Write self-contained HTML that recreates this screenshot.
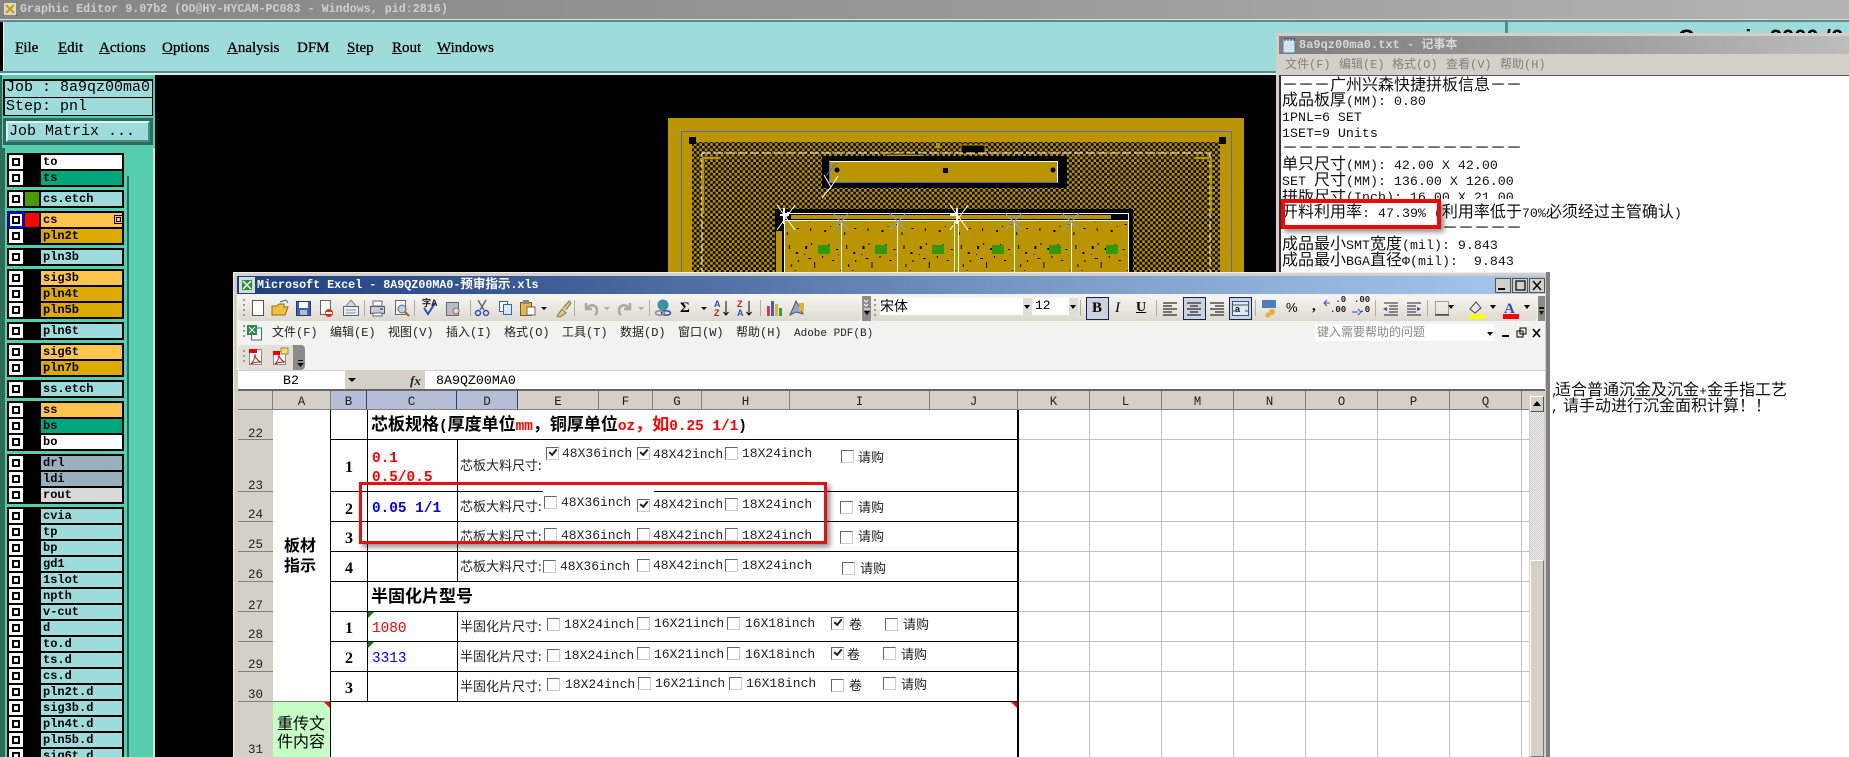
<!DOCTYPE html>
<html><head><meta charset="utf-8"><title>Graphic Editor</title>
<style>
html,body{margin:0;padding:0;width:1849px;height:757px;overflow:hidden;background:#000}
body{position:relative;font-family:"Liberation Mono","WenQuanYi Zen Hei","Noto Sans CJK SC",monospace;color:#000}
div,svg,i,b.r{position:absolute;display:block}
.t{position:absolute;white-space:pre;line-height:16px}
tt{font-family:"Liberation Mono",monospace;font-size:.833em}
.menu{font:15px "Liberation Serif",serif;-webkit-text-stroke:.3px #000;top:40px}
.grp{left:7px;width:117px;background:#000}
.c{left:9px;width:14px;height:14px;background:#fff;box-sizing:border-box}
.c:after{content:"";position:absolute;left:3px;top:3px;width:4px;height:4px;border:2px solid #000;background:#fff}
.c.act{outline:2px solid #00f;outline-offset:-1px}
b.r{left:41px;width:81px;height:14px;line-height:15px;font-size:12px;font-weight:bold;background:#9edcdc;padding-left:2px;box-sizing:border-box;white-space:pre;overflow:hidden}
.g{background:#ffc64d!important}.d{background:#dcaa00!important}.k{background:#00a67c!important}.w{background:#fff!important}.s{background:#9ab0bc!important}.l{background:#d9d9d9!important}
.n{font-size:16px;left:1282px;color:#111}
.ch{top:391px;height:18px;background:#d4d0c8;border-right:1px solid #808080;box-sizing:border-box;text-align:center;font-size:12.5px;line-height:22px;color:#222;overflow:hidden}
.chs{background:#b6bdd6;border-right-color:#2a3f7a}
.rh{left:238px;width:35px;background:#d4d0c8;border-bottom:1px solid #808080;box-sizing:border-box;text-align:center;font-size:12.5px;color:#222;overflow:hidden}
.h{left:331px;width:687px;height:1px;background:#000}
.v{width:1px;background:#000}
.gh{left:1018px;width:511px;height:1px;background:#c0c0c0}
.gv{top:410px;height:347px;width:1px;background:#c0c0c0}
.f{font-size:13px;color:#222}
.f13{font-size:13px;color:#222;font-family:"WenQuanYi Zen Hei","Noto Sans CJK SC",sans-serif}
.cb{width:11px;height:11px;background:#fff;border:1px solid #666;border-right-color:#ccc;border-bottom-color:#ccc;box-sizing:content-box}
.on:after{content:"";position:absolute;left:2px;top:1px;width:6px;height:3px;border-left:2px solid #222;border-bottom:2px solid #222;transform:rotate(-50deg)}
.bb{font-size:16px;font-weight:bold;font-family:"Liberation Serif",serif}
.em{font-size:14.4px}
.mt{font-size:12px;color:#222;top:324px;font-family:"WenQuanYi Zen Hei","Noto Sans CJK SC",sans-serif}
.mt tt{font-size:1em}
.red{border:4px solid #ee0808;box-sizing:border-box;box-shadow:3px 3px 5px rgba(0,0,0,.45)}
</style></head><body>

<!-- top title -->
<div style="left:0;top:0;width:1849px;height:19px;background:linear-gradient(90deg,#858585,#9a9a9a 55%,#b4b4b4)"></div>
<div style="left:0;top:19px;width:1849px;height:1px;background:#ddd"></div>
<div style="left:0;top:20px;width:1849px;height:2px;background:#5b8a8a"></div>
<svg style="left:3px;top:2px" width="14" height="14"><rect width="14" height="14" fill="#d8d8d0" stroke="#333"/><path d="M3 3l8 8M11 3l-8 8" stroke="#c8a000" stroke-width="2"/></svg>
<div class="t" style="left:20px;top:1px;color:#cfcfcf;font-size:11.7px;font-weight:bold">Graphic Editor 9.07b2 (OO@HY-HYCAM-PC083 - Windows, pid:2816)</div>

<!-- menu -->
<div style="left:3px;top:22px;width:1846px;height:51px;background:#9edcdc;border-left:1px solid #eee;box-sizing:border-box"></div>
<div style="left:0;top:71px;width:1849px;height:2px;background:#5b8a8a"></div>
<div style="left:0;top:73px;width:1849px;height:2px;background:#d8f2f2"></div>
<div style="left:1505px;top:20px;width:3px;height:55px;background:#5b8a8a"></div>
<div class="t menu" style="left:15px"><u>F</u>ile</div>
<div class="t menu" style="left:58px"><u>E</u>dit</div>
<div class="t menu" style="left:99px"><u>A</u>ctions</div>
<div class="t menu" style="left:162px"><u>O</u>ptions</div>
<div class="t menu" style="left:227px"><u>A</u>nalysis</div>
<div class="t menu" style="left:297px">DFM</div>
<div class="t menu" style="left:347px"><u>S</u>tep</div>
<div class="t menu" style="left:392px"><u>R</u>out</div>
<div class="t menu" style="left:437px"><u>W</u>indows</div>
<div style="left:1678px;top:22px;width:171px;height:11px;overflow:hidden"><div class="t" style="left:0;top:5px;font:bold 22px/22px 'Liberation Sans',sans-serif;white-space:pre">Genesis 2000 /6</div></div>

<!-- left panel -->
<div style="left:0;top:75px;width:155px;height:682px;background:#55ceb0"></div>
<div style="left:0;top:75px;width:2px;height:682px;background:#2e6b5a"></div>
<div style="left:153px;top:148px;width:2px;height:609px;background:#b9eedd"></div>
<div style="left:2px;top:148px;width:3px;height:609px;background:#2e6b5a"></div>
<div style="left:5px;top:148px;width:122px;height:609px;background:#55ceb0"></div>
<div style="left:127px;top:176px;width:2px;height:581px;background:#2e6b5a"></div>
<div style="left:3px;top:79px;width:150px;height:37px;background:#000"></div>
<div style="left:5px;top:81px;width:147px;height:16px;background:#9edcdc"></div>
<div style="left:5px;top:98px;width:147px;height:17px;background:#9edcdc"></div>
<div class="t" style="left:6px;top:80px;font-size:15px">Job : 8a9qz00ma0</div>
<div class="t" style="left:6px;top:99px;font-size:15px">Step: pnl</div>
<div style="left:3px;top:118px;width:150px;height:27px;background:#2e6b5a"></div>
<div style="left:6px;top:121px;width:144px;height:21px;background:#9edcdc;border:2px solid;border-color:#d8f4f4 #4c8a8a #4c8a8a #d8f4f4;box-sizing:border-box"></div>
<div class="t" style="left:9px;top:124px;font-size:15px">Job Matrix ...</div>

<!-- layer groups -->
<div class="grp" style="top:153px;height:34px"></div>
<div class="grp" style="top:190px;height:18px"></div>
<div class="grp" style="top:211px;height:34px"></div>
<div class="grp" style="top:248px;height:18px"></div>
<div class="grp" style="top:269px;height:50px"></div>
<div class="grp" style="top:322px;height:18px"></div>
<div class="grp" style="top:343px;height:34px"></div>
<div class="grp" style="top:380px;height:18px"></div>
<div class="grp" style="top:401px;height:50px"></div>
<div class="grp" style="top:454px;height:50px"></div>
<div class="grp" style="top:507px;height:250px"></div>

<i class="c" style="top:155px"></i><b class="r w" style="top:155px">to</b>
<i class="c" style="top:171px"></i><b class="r k" style="top:171px">ts</b>
<i class="c" style="top:192px"></i><b class="r" style="top:192px">cs.etch</b>
<div style="left:25px;top:192px;width:14px;height:14px;background:#4a9a00"></div>
<i class="c act" style="top:213px"></i><b class="r g" style="top:213px">cs</b>
<div style="left:25px;top:213px;width:14px;height:14px;background:#f00"></div>
<div style="left:116px;top:217px;width:3px;height:3px;border:1px solid #000;outline:1px solid #000;outline-offset:1px"></div>
<i class="c" style="top:229px"></i><b class="r d" style="top:229px">pln2t</b>
<i class="c" style="top:250px"></i><b class="r" style="top:250px">pln3b</b>
<i class="c" style="top:271px"></i><b class="r g" style="top:271px">sig3b</b>
<i class="c" style="top:287px"></i><b class="r d" style="top:287px">pln4t</b>
<i class="c" style="top:303px"></i><b class="r d" style="top:303px">pln5b</b>
<i class="c" style="top:324px"></i><b class="r" style="top:324px">pln6t</b>
<i class="c" style="top:345px"></i><b class="r g" style="top:345px">sig6t</b>
<i class="c" style="top:361px"></i><b class="r d" style="top:361px">pln7b</b>
<i class="c" style="top:382px"></i><b class="r" style="top:382px">ss.etch</b>
<i class="c" style="top:403px"></i><b class="r g" style="top:403px">ss</b>
<i class="c" style="top:419px"></i><b class="r k" style="top:419px">bs</b>
<i class="c" style="top:435px"></i><b class="r w" style="top:435px">bo</b>
<i class="c" style="top:456px"></i><b class="r s" style="top:456px">drl</b>
<i class="c" style="top:472px"></i><b class="r s" style="top:472px">ldi</b>
<i class="c" style="top:488px"></i><b class="r l" style="top:488px">rout</b>
<i class="c" style="top:509px"></i><b class="r" style="top:509px">cvia</b>
<i class="c" style="top:525px"></i><b class="r" style="top:525px">tp</b>
<i class="c" style="top:541px"></i><b class="r" style="top:541px">bp</b>
<i class="c" style="top:557px"></i><b class="r" style="top:557px">gd1</b>
<i class="c" style="top:573px"></i><b class="r" style="top:573px">1slot</b>
<i class="c" style="top:589px"></i><b class="r" style="top:589px">npth</b>
<i class="c" style="top:605px"></i><b class="r" style="top:605px">v-cut</b>
<i class="c" style="top:621px"></i><b class="r" style="top:621px">d</b>
<i class="c" style="top:637px"></i><b class="r" style="top:637px">to.d</b>
<i class="c" style="top:653px"></i><b class="r" style="top:653px">ts.d</b>
<i class="c" style="top:669px"></i><b class="r" style="top:669px">cs.d</b>
<i class="c" style="top:685px"></i><b class="r" style="top:685px">pln2t.d</b>
<i class="c" style="top:701px"></i><b class="r" style="top:701px">sig3b.d</b>
<i class="c" style="top:717px"></i><b class="r" style="top:717px">pln4t.d</b>
<i class="c" style="top:733px"></i><b class="r" style="top:733px">pln5b.d</b>
<i class="c" style="top:749px"></i><b class="r" style="top:749px">sig6t.d</b>

<!-- PCB -->
<svg style="left:0;top:0" width="1849" height="757">
<defs>
<pattern id="chk" width="5.4" height="5.4" patternUnits="userSpaceOnUse"><rect width="5.4" height="5.4" fill="#000"/><rect width="2.7" height="2.7" fill="#bb9500"/><rect x="2.7" y="2.7" width="2.7" height="2.7" fill="#bb9500"/></pattern>
<pattern id="spk" width="57.3" height="60" patternUnits="userSpaceOnUse"><rect width="57.3" height="60" fill="#bb9500"/>
<g fill="#000"><rect x="3" y="6" width="2" height="3"/><rect x="9" y="3" width="1" height="2"/><rect x="16" y="8" width="2" height="2"/><rect x="26" y="4" width="1" height="2"/><rect x="34" y="9" width="2" height="1"/><rect x="44" y="5" width="1" height="4"/><rect x="51" y="12" width="2" height="2"/><rect x="6" y="18" width="3" height="1"/><rect x="12" y="22" width="1" height="6"/><rect x="20" y="16" width="1" height="2"/><rect x="30" y="20" width="2" height="1"/><rect x="46" y="24" width="1" height="3"/><rect x="53" y="20" width="1" height="2"/><rect x="4" y="34" width="2" height="1"/><rect x="14" y="40" width="12" height="1"/><rect x="30" y="38" width="1" height="2"/><rect x="36" y="44" width="2" height="1"/><rect x="48" y="36" width="3" height="2"/><rect x="8" y="48" width="1" height="3"/><rect x="22" y="50" width="2" height="2"/><rect x="42" y="52" width="1" height="3"/><rect x="52" y="48" width="2" height="1"/><rect x="2" y="14" width="1" height="1"/><rect x="24" y="12" width="1" height="1"/><rect x="38" y="30" width="1" height="1"/><rect x="18" y="32" width="1" height="2"/><rect x="50" y="30" width="1" height="1"/><rect x="28" y="46" width="1" height="1"/></g>
<g fill="#3d9a10"><rect x="6" y="38" width="1" height="5"/><rect x="10" y="30" width="1" height="1"/><rect x="36" y="14" width="1" height="2"/></g></pattern>
</defs>
<rect x="668" y="118" width="576" height="160" fill="#bb9500"/>
<rect x="681.5" y="131.5" width="550" height="150" fill="none" stroke="#4a6cd0"/>
<rect x="692" y="142" width="528" height="140" fill="url(#chk)"/>
<rect x="689" y="137" width="7" height="7" fill="#000"/><rect x="1219" y="137" width="7" height="7" fill="#000"/>
<rect x="936" y="143" width="4" height="5" fill="#bb9500"/>
<rect x="961" y="145" width="24" height="9" fill="#000" stroke="#bb9500"/>
<rect x="886" y="154" width="38" height="5" fill="#bb9500" stroke="#000"/>
<rect x="702" y="153" width="508" height="130" fill="none" stroke="#fff" stroke-dasharray="9 3"/>
<rect x="822" y="156" width="245" height="32" fill="#000"/>
<rect x="829.5" y="161.5" width="228" height="21" fill="#bb9500" stroke="#4a6cd0"/>
<path d="M829.5 161.5h228v21" fill="none" stroke="#fff"/>
<circle cx="837" cy="170" r="2.5" fill="#000"/><rect x="943" y="168" width="5" height="5" fill="#000"/><circle cx="1053" cy="170" r="2.5" fill="#000"/>
<path d="M700 159h3v55M703 158h16M1209 158h-15M1211 159v55" stroke="#bb9500" stroke-width="2" fill="none"/>
<rect x="775" y="209" width="358" height="77" fill="#000"/>
<rect x="776" y="231" width="6" height="50" fill="#bb9500"/>
<rect x="791" y="215" width="320" height="4" fill="#bb9500"/>
<rect x="784" y="221" width="345" height="60" fill="url(#spk)"/>
<path d="M784.5 213.5H1128.5V280M784.5 220.5H1128.5M784.5 214V280M841.5 220V280M897.5 220V280M954.5 220V280M958.5 220V280M1014.5 220V280M1071.5 220V280" stroke="#fff" fill="none"/>
<g fill="#2f9a10"><rect x="818" y="245" width="12" height="9"/><rect x="875" y="245" width="12" height="9"/><rect x="932" y="245" width="12" height="9"/><rect x="992" y="245" width="12" height="9"/><rect x="1049" y="245" width="12" height="9"/><rect x="1106" y="245" width="12" height="9"/></g>
<path d="M777 205l18 25M795 205l-18 25M950 205l18 25M968 205l-18 25" stroke="#fff" fill="none"/>
<path d="M824 175l7 12 -9 11M831 187l7 -11" stroke="#fff" fill="none"/>
<path d="M833 213l8 9 8-9M833 230l8-8 8 8M890 213l8 9 8-9M890 230l8-8 8 8M1005 213l9 9 8-9M1005 230l9-8 8 8M1062 213l9 9 8-9M1062 230l9-8 8 8" stroke="#7fa0f0" fill="none"/>
<path d="M780 215h8v-3M784 208v16M958 215h-8M957 208v16" stroke="#fff" stroke-width="2" fill="none"/>
<path d="M826 176l10-13" stroke="#4a6cd0"/>
</svg>

<!-- notepad -->
<div style="left:1276px;top:33px;width:573px;height:724px;background:#fff"></div>
<div style="left:1276px;top:33px;width:573px;height:3px;background:#d4d0c8"></div>
<div style="left:1276px;top:33px;width:3px;height:250px;background:#d4d0c8"></div>
<div style="left:1279px;top:36px;width:570px;height:18px;background:linear-gradient(90deg,#7e7e7e,#a0a0a0 60%,#bdbdbd)"></div>
<div style="left:1279px;top:54px;width:570px;height:21px;background:#d4d0c8"></div>
<div style="left:1279px;top:75px;width:570px;height:1px;background:#555"></div>
<div style="left:1279px;top:75px;width:2px;height:210px;background:#333"></div>
<svg style="left:1282px;top:37px" width="14" height="17"><rect x="1" y="2" width="12" height="14" fill="#cfe4f5" stroke="#5a7aa0"/><path d="M3 1v3M6 1v3M9 1v3M12 1v3" stroke="#345"/></svg>
<div class="t" style="left:1299px;top:37px;color:#d8d8d8;font-size:12px;font-weight:bold">8a9qz00ma0.txt - 记事本</div>
<div class="t mt" style="left:1285px;top:56px;color:#808080">文件<tt>(F)</tt></div>
<div class="t mt" style="left:1339px;top:56px;color:#808080">编辑<tt>(E)</tt></div>
<div class="t mt" style="left:1392px;top:56px;color:#808080">格式<tt>(O)</tt></div>
<div class="t mt" style="left:1446px;top:56px;color:#808080">查看<tt>(V)</tt></div>
<div class="t mt" style="left:1500px;top:56px;color:#808080">帮助<tt>(H)</tt></div>

<div class="t n" style="top:78px">－－－广州兴森快捷拼板信息－－</div>
<div class="t n" style="top:93px">成品板厚<tt>(MM): 0.80</tt></div>
<div class="t n" style="top:109px"><tt>1PNL=6 SET</tt></div>
<div class="t n" style="top:125px"><tt>1SET=9 Units</tt></div>
<div class="t n" style="top:141px">－－－－－－－－－－－－－－－</div>
<div class="t n" style="top:157px">单只尺寸<tt>(MM): 42.00 X 42.00</tt></div>
<div class="t n" style="top:173px"><tt>SET </tt>尺寸<tt>(MM): 136.00 X 126.00</tt></div>
<div class="t n" style="top:189px;height:10px;overflow:hidden">拼版尺寸<tt>(Inch): 16.00 X 21.00</tt></div>
<div class="t n" style="top:205px">开料利用率<tt>: 47.39% (</tt>利用率低于<tt>70%</tt>必须经过主管确认<tt>)</tt></div>
<div class="t n" style="top:221px;left:1442px">－－－－－</div>
<div class="t n" style="top:237px">成品最小<tt>SMT</tt>宽度<tt>(mil): 9.843</tt></div>
<div class="t n" style="top:253px">成品最小<tt>BGA</tt>直径<tt>&#934;(mil):  9.843</tt></div>
<div class="t n" style="top:383px;left:1551px"><tt>,</tt></div>
<div class="t n" style="top:383px;left:1555px">适合普通沉金及沉金<tt>+</tt>金手指工艺</div>
<div class="t n" style="top:399px;left:1551px"><tt>,</tt></div>
<div class="t n" style="top:399px;left:1563px">请手动进行沉金面积计算！！</div>
<div class="red" style="left:1281px;top:199px;width:160px;height:30px"></div>

<!-- Excel window -->
<div style="left:233px;top:272px;width:1317px;height:485px;background:#d4d0c8;border-top:1px solid #eee;border-left:1px solid #eee;box-sizing:border-box"></div>
<div style="left:1546px;top:272px;width:4px;height:485px;background:#808080"></div>
<div style="left:237px;top:276px;width:1308px;height:18px;background:linear-gradient(90deg,#1f3f80,#3f5f98 25%,#7f9fca 65%,#a6c8ee)"></div>
<svg style="left:239px;top:277px" width="16" height="16"><rect x=".5" y=".5" width="15" height="15" fill="#cfe0c8" stroke="#ddd"/><rect x="3" y="3" width="10" height="10" fill="#2d8a3a"/><path d="M4 4l8 8M12 4l-8 8" stroke="#fff" stroke-width="1.5"/></svg>
<div class="t" style="left:257px;top:277px;color:#fff;font-size:11.7px;font-weight:bold">Microsoft Excel - 8A9QZ00MA0-<span style="font-size:12.5px">预审指示</span>.xls</div>
<svg style="left:1495px;top:278px" width="51" height="15">
<g fill="#d4d0c8" stroke="#555"><rect x=".5" y=".5" width="15" height="14"/><rect x="17.5" y=".5" width="15" height="14"/><rect x="34.5" y=".5" width="15" height="14"/></g>
<rect x="3" y="10" width="7" height="2" fill="#000"/><rect x="21" y="3" width="9" height="9" fill="none" stroke="#000" stroke-width="1.2"/><path d="M38 3l8 9M46 3l-8 9" stroke="#000" stroke-width="1.4"/></svg>

<!-- toolbars -->
<div style="left:237px;top:294px;width:1308px;height:76px;background:#f2f2ef"></div>
<div style="left:238px;top:296px;width:623px;height:25px;background:linear-gradient(#f6f5f0,#dcd9cf);border-radius:4px"></div>
<div style="left:862px;top:296px;width:9px;height:25px;background:#8b8b8b"></div>
<div style="left:871px;top:296px;width:666px;height:25px;background:linear-gradient(#f6f5f0,#dcd9cf);border-radius:4px"></div>
<div style="left:1538px;top:296px;width:7px;height:25px;background:#8b8b8b"></div>
<div style="left:238px;top:345px;width:56px;height:25px;background:#e2dfd6;border-radius:4px 0 0 4px"></div>
<div style="left:293px;top:345px;width:12px;height:25px;background:#8b8b8b;border-radius:0 4px 4px 0"></div>
<div style="left:880px;top:298px;width:152px;height:17px;background:#fff"></div>
<div style="left:1023px;top:298px;width:9px;height:17px;background:#e0ddd4"></div>
<div class="t" style="left:880px;top:298px;font-size:14px;font-family:'WenQuanYi Zen Hei','Noto Sans CJK SC',sans-serif">宋体</div>
<div style="left:1032px;top:298px;width:46px;height:17px;background:#fff"></div>
<div style="left:1069px;top:298px;width:9px;height:17px;background:#e0ddd4"></div>
<div class="t" style="left:1035px;top:298px;font-size:13px">12</div>
<div style="left:1086px;top:297px;width:23px;height:23px;background:#cdd2dc;border:1px solid #0a2468;box-sizing:border-box"></div>
<div style="left:1183px;top:297px;width:23px;height:23px;background:#cdd2dc;border:1px solid #0a2468;box-sizing:border-box"></div>
<div style="left:1229px;top:297px;width:23px;height:23px;background:#cdd2dc;border:1px solid #0a2468;box-sizing:border-box"></div>
<div class="t" style="left:1092px;top:300px;font:bold 15px/16px 'Liberation Serif',serif">B</div>
<div class="t" style="left:1115px;top:300px;font:italic 15px/16px 'Liberation Serif',serif">I</div>
<div class="t" style="left:1136px;top:300px;font:bold 14px/16px 'Liberation Serif',serif"><u>U</u></div>
<div class="t" style="left:1286px;top:300px;font:13px/16px 'Liberation Sans',sans-serif">%</div>
<div class="t" style="left:1312px;top:298px;font:bold 15px/16px 'Liberation Serif',serif">,</div>
<div class="t" style="left:680px;top:300px;font:bold 15px/16px 'Liberation Serif',serif">Σ</div>
<div class="t" style="left:1330px;top:295px;font-size:9px;font-weight:bold;line-height:10px;white-space:pre;color:#222"> .0
.00</div>
<div class="t" style="left:1354px;top:295px;font-size:9px;font-weight:bold;line-height:10px;white-space:pre;color:#222">.00
 .0</div>

<svg style="left:0;top:0" width="1849" height="757">
<g fill="#999"><rect x="243" y="299" width="2" height="2"/><rect x="243" y="304" width="2" height="2"/><rect x="243" y="309" width="2" height="2"/><rect x="243" y="314" width="2" height="2"/><rect x="874" y="299" width="2" height="2"/><rect x="874" y="304" width="2" height="2"/><rect x="874" y="309" width="2" height="2"/><rect x="874" y="314" width="2" height="2"/><rect x="243" y="325" width="2" height="2"/><rect x="243" y="330" width="2" height="2"/><rect x="243" y="335" width="2" height="2"/><rect x="243" y="350" width="2" height="2"/><rect x="243" y="355" width="2" height="2"/><rect x="243" y="360" width="2" height="2"/></g>
<rect x="252.5" y="300.5" width="11" height="15" fill="#fff" stroke="#555"/>
<path d="M272 315v-9h5l2-2h5v3h4l-3 8z" fill="#f0c040" stroke="#8a6a10"/><path d="M280 302l6-2 2 3" stroke="#3c6cc0" fill="none"/>
<rect x="296.5" y="301.5" width="14" height="14" fill="#3a62b0" stroke="#223c7a"/><rect x="299" y="302" width="9" height="6" fill="#fff"/><rect x="300" y="310" width="7" height="5" fill="#bbb"/>
<rect x="320.5" y="300.5" width="10" height="14" fill="#fff" stroke="#666"/><circle cx="329" cy="313" r="4" fill="#d83020"/><rect x="326" y="312" width="6" height="2" fill="#fff"/>
<rect x="343.5" y="306.5" width="15" height="9" fill="#e8eef8" stroke="#567"/><path d="M346 306l5-6 5 6" fill="#d8d8d8" stroke="#789"/><path d="M346 310h10M346 313h10" stroke="#88a"/>
<path d="M370.5 306.5h14v7h-14z" fill="#c8ccd8" stroke="#556"/><rect x="373" y="301" width="9" height="5" fill="#fff" stroke="#667"/><rect x="373" y="313" width="9" height="3" fill="#fff" stroke="#667"/><rect x="380" y="308" width="3" height="2" fill="#3ca040"/>
<rect x="395.5" y="300.5" width="10" height="14" fill="#fff" stroke="#667"/><circle cx="402" cy="309" r="4" fill="#bcd4ee" stroke="#567"/><path d="M405 312l4 4" stroke="#996020" stroke-width="2"/>
<path d="M424 308l4 6 7-11" fill="none" stroke="#2a50c0" stroke-width="2"/><text x="422" y="306" font-size="9" font-weight="bold" fill="#222" font-family="Liberation Sans">字A</text>
<rect x="446.5" y="302.5" width="12" height="13" fill="#b8bcc8" stroke="#667"/><circle cx="456" cy="311" r="3" fill="#cfe0f0" stroke="#a07020"/>
<path d="M478 300l6 10M486 300l-6 10" stroke="#667" stroke-width="1.5"/><circle cx="478" cy="313" r="2.5" fill="none" stroke="#2a50c0" stroke-width="1.5"/><circle cx="486" cy="313" r="2.5" fill="none" stroke="#2a50c0" stroke-width="1.5"/>
<rect x="499.5" y="301.5" width="8" height="10" fill="#fff" stroke="#36a"/><rect x="503.5" y="304.5" width="8" height="10" fill="#dbe8f8" stroke="#36a"/>
<rect x="520.5" y="302.5" width="11" height="13" fill="#e0b850" stroke="#7a5a10"/><rect x="523" y="300" width="6" height="4" fill="#888"/><rect x="527" y="307" width="8" height="8" fill="#fff" stroke="#667"/>
<path d="M541 307h6l-3 3z" fill="#000"/>
<path d="M557 316l5-7 4 4-6 4zM563 308l6-7 2 2-5 7" fill="#e8c860" stroke="#776"/>
<path d="M586 303v6h6M587 308c3-4 10-4 10 3 0 2-1 3-2 4" fill="none" stroke="#a8a8a8" stroke-width="2.5"/>
<path d="M604 307h6l-3 3z" fill="#aaa"/>
<path d="M630 303v6h-6M629 308c-3-4-10-4-10 3 0 2 1 3 2 4" fill="none" stroke="#a8a8a8" stroke-width="2.5"/>
<path d="M638 307h6l-3 3z" fill="#aaa"/>
<circle cx="663" cy="305" r="5.5" fill="#3a8ac8"/><path d="M660 302l4 1 1 4-3 1z" fill="#4aa040"/><ellipse cx="666" cy="313" rx="4.5" ry="2.2" fill="none" stroke="#2a50a0" stroke-width="1.5"/><ellipse cx="660" cy="313" rx="4.5" ry="2.2" fill="none" stroke="#889" stroke-width="1.5"/>
<path d="M701 307h6l-3 3z" fill="#000"/>
<text x="714" y="307" font-size="9" font-weight="bold" fill="#2a50c0" font-family="Liberation Sans">A</text><text x="714" y="316" font-size="9" font-weight="bold" fill="#b02020" font-family="Liberation Sans">Z</text><path d="M726 301v14M723.5 312l2.5 3 2.5-3" stroke="#000" fill="none"/>
<text x="737" y="307" font-size="9" font-weight="bold" fill="#b02020" font-family="Liberation Sans">Z</text><text x="737" y="316" font-size="9" font-weight="bold" fill="#2a50c0" font-family="Liberation Sans">A</text><path d="M749 301v14M746.5 312l2.5 3 2.5-3" stroke="#000" fill="none"/>
<rect x="767" y="306" width="3" height="10" fill="#d84030"/><rect x="771" y="301" width="3" height="15" fill="#3a62c0"/><rect x="775" y="304" width="3" height="12" fill="#e8b030"/><rect x="779" y="308" width="3" height="8" fill="#3a9a40"/>
<path d="M790 315l6-14 4 7 3 6-7-2z" fill="#88a8d8" stroke="#556"/><rect x="799" y="303" width="5" height="8" fill="#e8b030"/>
<path d="M364.5 300v16M414.5 300v16M470.5 300v16M574.5 300v16M649.5 300v16M760.5 300v16M1080.5 300v16M1156.5 300v16M1255.5 300v16M1375.5 300v16M1427.5 300v16" stroke="#b0aea4"/>
<path d="M864 300l2 2 2-2M864 304l2 2 2-2" stroke="#fff" fill="none"/><path d="M864 311h6l-3 4z" fill="#000"/><path d="M864 309h6" stroke="#fff"/>
<path d="M1539 307h5v2h-5zM1539 311h5l-2.5 4z" fill="#111"/><path d="M298 360h5v1h-5zM297 363h7l-3.5 4z" fill="#111"/>
<path d="M1024 305h6l-3 4zM1070 305h6l-3 4zM1448 305h6l-3 4zM1490 305h6l-3 4zM1524 305h6l-3 4z" fill="#000"/>
<path d="M1163 303h14M1163 306h9M1163 309h14M1163 312h9M1163 315h14M1187 303h14M1190 306h8M1187 309h14M1190 312h8M1187 315h14M1210 303h14M1215 306h9M1210 309h14M1215 312h9M1210 315h14" stroke="#000" fill="none"/>
<rect x="1232.5" y="301.5" width="16" height="14" fill="#dfe6f4" stroke="#456"/><text x="1235" y="312" font-size="9" font-weight="bold" fill="#111" font-family="Liberation Sans">a</text><path d="M1232 305h16M1232 311h3M1245 311h3" stroke="#456"/>
<rect x="1262" y="300" width="14" height="8" fill="#4a80c0"/><circle cx="1272" cy="312" r="3" fill="#e8b030"/><circle cx="1268" cy="315" r="2.5" fill="#e8b030"/>
<path d="M1327 300l-3 3 3 3M1324 303h6M1352 312h6M1358 309l3 3-3 3" stroke="#2a50c0" fill="none"/>
<path d="M1384 303h14M1389 306h9M1389 309h9M1389 312h9M1384 315h14M1407 303h14M1407 306h9M1407 309h9M1407 312h9M1407 315h14" stroke="#223" fill="none"/><path d="M1387 307l-4 2 4 2z" fill="#2a50c0"/><path d="M1417 307l4 2-4 2z" fill="#2a50c0"/>
<rect x="1435.5" y="301.5" width="13" height="13" fill="none" stroke="#555" stroke-dasharray="1 1"/><path d="M1435 315h14" stroke="#000"/>
<path d="M1470 309l6-7 5 6-6 5z" fill="#eee" stroke="#445"/><rect x="1469" y="314" width="16" height="5" fill="#ff0"/>
<text x="1504" y="313" font-size="15" font-weight="bold" fill="#2a50b0" font-family="Liberation Serif">A</text><rect x="1503" y="314" width="16" height="5" fill="#f00"/>
<rect x="251.5" y="328" width="10" height="12" fill="#fff" stroke="#36a"/><rect x="247" y="325" width="10" height="10" fill="#2d8a3a"/><path d="M249 327l6 6M255 327l-6 6" stroke="#fff"/>
<rect x="249.5" y="349.5" width="12" height="15" fill="#fff" stroke="#889"/><rect x="249" y="349" width="8" height="4" fill="#e00"/><path d="M251 364c3-3 4-7 4-10 0 4 3 7 6 8-3 0-7 0-10 2z" fill="none" stroke="#d01010"/>
<rect x="273.5" y="351.5" width="12" height="13" fill="#fff" stroke="#889"/><rect x="273" y="351" width="7" height="4" fill="#e00"/><path d="M275 364c3-3 4-7 4-10 0 4 3 7 6 8-3 0-7 0-10 2z" fill="none" stroke="#d01010"/><rect x="281" y="348" width="7" height="6" fill="#ffe050" stroke="#886"/>
</svg>

<div class="t mt" style="left:272px">文件<tt>(F)</tt></div>
<div class="t mt" style="left:330px">编辑<tt>(E)</tt></div>
<div class="t mt" style="left:388px">视图<tt>(V)</tt></div>
<div class="t mt" style="left:446px">插入<tt>(I)</tt></div>
<div class="t mt" style="left:504px">格式<tt>(O)</tt></div>
<div class="t mt" style="left:562px">工具<tt>(T)</tt></div>
<div class="t mt" style="left:620px">数据<tt>(D)</tt></div>
<div class="t mt" style="left:678px">窗口<tt>(W)</tt></div>
<div class="t mt" style="left:736px">帮助<tt>(H)</tt></div>
<div class="t mt" style="left:794px;font-size:11px"><tt>Adobe PDF(B)</tt></div>
<div style="left:1315px;top:324px;width:179px;height:17px;background:#fff"></div>
<div class="t mt" style="left:1317px;color:#888">键入需要帮助的问题</div>
<svg style="left:1484px;top:326px" width="60" height="14"><path d="M3 6h6l-3 4z" fill="#000"/><rect x="18" y="9" width="7" height="2" fill="#000"/><rect x="33" y="5" width="6" height="6" fill="none" stroke="#000"/><rect x="36" y="2" width="6" height="6" fill="none" stroke="#000"/><path d="M49 3l7 8M56 3l-7 8" stroke="#000" stroke-width="1.6"/></svg>

<!-- formula bar -->
<div style="left:237px;top:370px;width:1309px;height:20px;background:#d4d0c8"></div>
<div style="left:238px;top:371px;width:107px;height:18px;background:#fff"></div>
<div style="left:425px;top:371px;width:1120px;height:18px;background:#fff"></div>
<div class="t" style="left:283px;top:373px;font-size:13.3px">B2</div>
<svg style="left:345px;top:375px" width="16" height="10"><path d="M3 3h8l-4 4z" fill="#000"/></svg>
<div class="t" style="left:436px;top:373px;font-size:13.3px">8A9QZ00MA0</div>
<svg style="left:405px;top:372px" width="20" height="18"><text x="5" y="13" font-size="13" font-style="italic" font-weight="bold" fill="#222" font-family="Liberation Serif">fx</text></svg>

<!-- grid background -->
<div style="left:238px;top:389px;width:1307px;height:2px;background:#666"></div>
<div style="left:238px;top:391px;width:1291px;height:366px;background:#fff"></div>

<!-- column headers -->
<div class="ch" style="left:238px;width:35px"></div>
<div class="ch" style="left:273px;width:58px">A</div>
<div class="ch chs" style="left:331px;width:36px">B</div>
<div class="ch chs" style="left:367px;width:90px">C</div>
<div class="ch chs" style="left:457px;width:61px">D</div>
<div class="ch" style="left:518px;width:81px">E</div>
<div class="ch" style="left:599px;width:54px">F</div>
<div class="ch" style="left:653px;width:49px">G</div>
<div class="ch" style="left:702px;width:88px">H</div>
<div class="ch" style="left:790px;width:140px">I</div>
<div class="ch" style="left:930px;width:88px">J</div>
<div class="ch" style="left:1018px;width:72px">K</div>
<div class="ch" style="left:1090px;width:72px">L</div>
<div class="ch" style="left:1162px;width:72px">M</div>
<div class="ch" style="left:1234px;width:72px">N</div>
<div class="ch" style="left:1306px;width:72px">O</div>
<div class="ch" style="left:1378px;width:72px">P</div>
<div class="ch" style="left:1450px;width:72px">Q</div>
<div class="ch" style="left:1522px;width:8px;border-right:none"></div>
<div style="left:238px;top:409px;width:1291px;height:1px;background:#808080"></div>

<!-- row headers -->
<div class="rh" style="top:410px;height:30px;line-height:48px">22</div>
<div class="rh" style="top:440px;height:52px;line-height:92px">23</div>
<div class="rh" style="top:492px;height:30px;line-height:46px">24</div>
<div class="rh" style="top:522px;height:30px;line-height:46px">25</div>
<div class="rh" style="top:552px;height:30px;line-height:46px">26</div>
<div class="rh" style="top:582px;height:30px;line-height:48px">27</div>
<div class="rh" style="top:612px;height:30px;line-height:46px">28</div>
<div class="rh" style="top:642px;height:30px;line-height:46px">29</div>
<div class="rh" style="top:672px;height:30px;line-height:46px">30</div>
<div class="rh" style="top:702px;height:55px;line-height:96px;border-bottom:none">31</div>

<!-- gray grid -->
<div class="gh" style="top:439px"></div><div class="gh" style="top:491px"></div><div class="gh" style="top:521px"></div><div class="gh" style="top:551px"></div><div class="gh" style="top:581px"></div><div class="gh" style="top:611px"></div><div class="gh" style="top:641px"></div><div class="gh" style="top:671px"></div><div class="gh" style="top:701px"></div>
<div class="gv" style="left:1089px"></div><div class="gv" style="left:1161px"></div><div class="gv" style="left:1233px"></div><div class="gv" style="left:1305px"></div><div class="gv" style="left:1377px"></div><div class="gv" style="left:1449px"></div><div class="gv" style="left:1521px"></div>

<!-- black table -->
<div class="h" style="top:439px"></div><div class="h" style="top:491px"></div><div class="h" style="top:521px"></div><div class="h" style="top:551px"></div><div class="h" style="top:581px"></div><div class="h" style="top:611px"></div><div class="h" style="top:641px"></div><div class="h" style="top:671px"></div><div class="h" style="top:701px"></div>
<div style="left:273px;top:701px;width:58px;height:1px;background:#808080"></div>
<div class="v" style="left:330px;top:410px;height:347px"></div>
<div class="v" style="left:367px;top:410px;height:292px"></div>
<div class="v" style="left:457px;top:439px;height:143px"></div>
<div class="v" style="left:457px;top:611px;height:91px"></div>
<div class="v" style="left:1017px;top:410px;height:347px;width:2px"></div>
<div style="left:543px;top:491px;width:111px;height:1px;background:#fff"></div>
<div style="left:273px;top:702px;width:57px;height:55px;background:#c6ffc6"></div>
<svg style="left:0;top:0" width="1849" height="757"><path d="M324 702h6v6zM1011 702h6v6z" fill="#f00"/><path d="M368 612h6l-6 6zM368 642h6l-6 6z" fill="#0a7a1a"/></svg>

<!-- cell text -->
<div class="t" style="left:284px;top:534px;width:32px;font-size:16px;font-weight:bold;font-family:'WenQuanYi Zen Hei','Noto Sans CJK SC',sans-serif;line-height:20px;text-align:center">板材<br>指示</div>
<div class="t" style="left:277px;top:713px;font-size:16px;line-height:18px;font-family:'WenQuanYi Zen Hei','Noto Sans CJK SC',sans-serif">重传文<br>件内容</div>

<div class="t bb" style="left:345px;top:460px">1</div>
<div class="t bb" style="left:345px;top:502px">2</div>
<div class="t bb" style="left:345px;top:531px">3</div>
<div class="t bb" style="left:345px;top:561px">4</div>
<div class="t bb" style="left:345px;top:621px">1</div>
<div class="t bb" style="left:345px;top:651px">2</div>
<div class="t bb" style="left:345px;top:681px">3</div>

<div class="t" style="left:371px;top:419px;font-size:17px;font-weight:bold">芯板规格<tt style="font-size:14.4px">(</tt>厚度单位<tt style="color:#f00;font-size:14.4px">mm</tt>，铜厚单位<tt style="color:#f00;font-size:14.4px">oz</tt><span style="color:#f00">，如<tt style="font-size:14.4px">0.25 1/1</tt></span><tt style="font-size:14.4px">)</tt></div>
<div class="t" style="left:371px;top:591px;font-size:17px;font-weight:bold">半固化片型号</div>

<div class="t em" style="left:372px;top:451px;color:#f00;font-weight:bold">0.1</div>
<div class="t em" style="left:372px;top:470px;color:#f00;font-weight:bold;height:12px;overflow:hidden">0.5/0.5</div>
<div class="t em" style="left:372px;top:501px;color:#00f;font-weight:bold">0.05 1/1</div>
<div class="t em" style="left:372px;top:621px;color:#f00">1080</div>
<div class="t em" style="left:372px;top:651px;color:#00f">3313</div>

<!-- form rows -->
<div class="t f13" style="left:460px;top:457px">芯板大料尺寸:</div>
<i class="cb on" style="left:546px;top:447px"></i><div class="t f" style="left:562px;top:446px">48X36inch</div>
<i class="cb on" style="left:637px;top:447px"></i><div class="t f" style="left:653px;top:447px">48X42inch</div>
<i class="cb" style="left:725px;top:447px"></i><div class="t f" style="left:742px;top:446px">18X24inch</div>
<i class="cb" style="left:841px;top:450px"></i><div class="t f13" style="left:858px;top:449px">请购</div>

<div class="t f13" style="left:460px;top:498px">芯板大料尺寸:</div>
<i class="cb" style="left:544px;top:496px"></i><div class="t f" style="left:561px;top:495px">48X36inch</div>
<i class="cb on" style="left:637px;top:499px"></i><div class="t f" style="left:653px;top:497px">48X42inch</div>
<i class="cb" style="left:725px;top:498px"></i><div class="t f" style="left:742px;top:497px">18X24inch</div>
<i class="cb" style="left:840px;top:501px"></i><div class="t f13" style="left:858px;top:499px">请购</div>

<div class="t f13" style="left:460px;top:528px">芯板大料尺寸:</div>
<i class="cb" style="left:544px;top:528px"></i><div class="t f" style="left:561px;top:528px">48X36inch</div>
<i class="cb" style="left:637px;top:528px"></i><div class="t f" style="left:653px;top:528px">48X42inch</div>
<i class="cb" style="left:725px;top:528px"></i><div class="t f" style="left:742px;top:528px">18X24inch</div>
<i class="cb" style="left:840px;top:531px"></i><div class="t f13" style="left:858px;top:528px">请购</div>

<div class="t f13" style="left:460px;top:558px">芯板大料尺寸:</div>
<i class="cb" style="left:543px;top:560px"></i><div class="t f" style="left:560px;top:559px">48X36inch</div>
<i class="cb" style="left:637px;top:559px"></i><div class="t f" style="left:653px;top:558px">48X42inch</div>
<i class="cb" style="left:725px;top:559px"></i><div class="t f" style="left:742px;top:558px">18X24inch</div>
<i class="cb" style="left:842px;top:562px"></i><div class="t f13" style="left:860px;top:560px">请购</div>

<div class="t f13" style="left:460px;top:618px">半固化片尺寸:</div>
<i class="cb" style="left:547px;top:618px"></i><div class="t f" style="left:564px;top:617px">18X24inch</div>
<i class="cb" style="left:637px;top:617px"></i><div class="t f" style="left:654px;top:616px">16X21inch</div>
<i class="cb" style="left:727px;top:617px"></i><div class="t f" style="left:745px;top:616px">16X18inch</div>
<i class="cb on" style="left:831px;top:617px"></i><div class="t f13" style="left:849px;top:616px">卷</div>
<i class="cb" style="left:885px;top:618px"></i><div class="t f13" style="left:903px;top:616px">请购</div>

<div class="t f13" style="left:460px;top:648px">半固化片尺寸:</div>
<i class="cb" style="left:547px;top:649px"></i><div class="t f" style="left:564px;top:648px">18X24inch</div>
<i class="cb" style="left:637px;top:647px"></i><div class="t f" style="left:654px;top:647px">16X21inch</div>
<i class="cb" style="left:727px;top:647px"></i><div class="t f" style="left:745px;top:647px">16X18inch</div>
<i class="cb on" style="left:831px;top:647px"></i><div class="t f13" style="left:847px;top:646px">卷</div>
<i class="cb" style="left:883px;top:647px"></i><div class="t f13" style="left:901px;top:646px">请购</div>

<div class="t f13" style="left:460px;top:678px">半固化片尺寸:</div>
<i class="cb" style="left:547px;top:678px"></i><div class="t f" style="left:565px;top:677px">18X24inch</div>
<i class="cb" style="left:638px;top:677px"></i><div class="t f" style="left:655px;top:676px">16X21inch</div>
<i class="cb" style="left:729px;top:677px"></i><div class="t f" style="left:746px;top:676px">16X18inch</div>
<i class="cb" style="left:831px;top:679px"></i><div class="t f13" style="left:849px;top:677px">卷</div>
<i class="cb" style="left:883px;top:677px"></i><div class="t f13" style="left:901px;top:676px">请购</div>

<!-- scrollbar -->
<div style="left:1529px;top:391px;width:16px;height:366px;background:#d4d0c8"></div>
<div style="left:1530px;top:412px;width:14px;height:148px;background:repeating-conic-gradient(#eee 0 25%,#ccc 0 50%) 0 0/2px 2px"></div>
<div style="left:1530px;top:396px;width:14px;height:16px;background:#d4d0c8;border:1px solid;border-color:#fff #555 #555 #fff;box-sizing:border-box"></div>
<svg style="left:1532px;top:400px" width="10" height="8"><path d="M1 6h8L5 1z" fill="#000"/></svg>
<div style="left:1530px;top:560px;width:14px;height:197px;background:#d4d0c8;border:1px solid;border-color:#fff #777 #777 #fff;box-sizing:border-box"></div>

<!-- red highlight -->
<div class="red" style="left:359px;top:482px;width:468px;height:62px;border-color:#e21010;border-width:3px"></div>

</body></html>
